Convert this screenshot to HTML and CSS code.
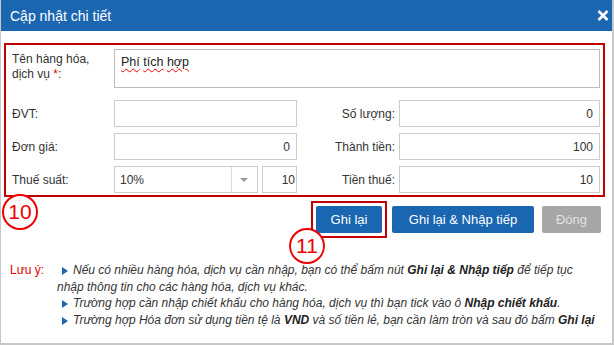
FILE: index.html
```html
<!DOCTYPE html>
<html lang="vi">
<head>
    <meta charset="UTF-8">
    <title>Cập nhật chi tiết</title>
    <link rel="stylesheet" href="styles.css">
</head>
<body>

    <div class="dialog">
        <div class="dialog-title">
            <span>Cập nhật chi tiết</span>
            <svg class="close" width="12" height="11" viewBox="0 0 12 11">
                <path d="M1.5 1 L10.5 10 M10.5 1 L1.5 10" stroke="#fff" stroke-width="2.6"/>
            </svg>
        </div>

        <div class="dialog-body">
            <div class="form-box">
                <div class="lbl lbl-top">Tên hàng hóa,<br>dịch vụ <span class="req">*</span>:</div>
                <div class="field textarea"><span class="spell">Phí</span> <span class="spell">tích</span> <span class="spell">hợp</span></div>

                <div class="lbl">ĐVT:</div>
                <div class="field"></div>
                <div class="lbl lbl-right">Số lượng:</div>
                <div class="field num">0</div>

                <div class="lbl">Đơn giá:</div>
                <div class="field num">0</div>
                <div class="lbl lbl-right">Thành tiền:</div>
                <div class="field num">100</div>

                <div class="lbl">Thuế suất:</div>
                <div class="tax">
                    <div class="select">
                        <span class="select-value">10%</span>
                        <span class="select-arrow"></span>
                    </div>
                    <div class="field num small">10</div>
                </div>
                <div class="lbl lbl-right">Tiền thuế:</div>
                <div class="field num">10</div>
            </div>

            <div class="actions">
                <div class="highlight">
                    <button class="btn">Ghi lại</button>
                </div>
                <button class="btn btn-next">Ghi lại &amp; Nhập tiếp</button>
                <button class="btn btn-off">Đóng</button>
            </div>

            <div class="note">
                <div class="note-title">Lưu ý:</div>
                <div class="note-list">
                    <p><i class="tri"></i>Nếu có nhiều hàng hóa, dịch vụ cần nhập, bạn có thể bấm nút <b>Ghi lại &amp; Nhập tiếp</b> để tiếp tục<br>nhập thông tin cho các hàng hóa, dịch vụ khác.</p>
                    <p><i class="tri"></i>Trường hợp cần nhập chiết khấu cho hàng hóa, dịch vụ thì bạn tick vào ô <b>Nhập chiết khấu</b>.</p>
                    <p><i class="tri"></i>Trường hợp Hóa đơn sử dụng tiền tệ là <b>VND</b> và số tiền lẻ, bạn cần làm tròn và sau đó bấm <b>Ghi lại</b></p>
                </div>
            </div>
        </div>

        <span class="mark mark-10">10</span>
        <span class="mark mark-11">11</span>
    </div>

</body>
</html>
```

FILE: styles.css
```css
body {
    margin: 0;
    font-family: "Liberation Sans", Arial, sans-serif;
    background: #fff;
}

.dialog {
    position: relative;
    box-sizing: border-box;
    width: 614px;
    height: 345px;
    border: solid #c8c8c8;
    border-width: 0 2px 2px 1px;
    background: #fff;
}

.dialog-title {
    height: 31px;
    background: #1b66b1;
    color: #fff;
    font-size: 14px;
    display: flex;
    align-items: center;
    justify-content: space-between;
    padding: 0 3px 0 9px;
}

.close {
    margin-top: -1px;
}

.dialog-body {
    padding: 12px 0 0 3px;
}

.form-box {
    width: 601px;
    box-sizing: border-box;
    border: 2px solid #c00000;
    padding: 4px 3px 2px 6px;
    display: grid;
    grid-template-columns: 102px 183px 102px 201px;
    grid-template-rows: 45px 27px 27px 27px;
    row-gap: 6px;
    font-size: 12px;
    color: #333;
}

.lbl {
    display: flex;
    align-items: center;
}

.lbl-top {
    display: block;
    padding-top: 3px;
    line-height: 15px;
}

.lbl-right {
    justify-content: flex-end;
    padding-right: 4px;
}

.req {
    color: #e00;
}

.field {
    box-sizing: border-box;
    height: 27px;
    border: 1px solid #ccc;
    background: #fff;
    display: flex;
    align-items: center;
    padding: 0 6px;
}

.num {
    justify-content: flex-end;
}

.textarea {
    display: block;
    grid-column: 2 / 5;
    height: 39px;
    padding-top: 5px;
    font-size: 12.5px;
    border-color: #bbb;
    color: #222;
}

.spell {
    text-decoration: underline wavy #e00;
    text-decoration-thickness: 1px;
    text-underline-offset: 2px;
}

.tax {
    display: flex;
    gap: 4px;
}

.select {
    box-sizing: border-box;
    width: 144px;
    height: 27px;
    border: 1px solid #ccc;
    display: flex;
    align-items: center;
}

.select-value {
    flex: 1;
    padding-left: 5px;
}

.select-arrow {
    width: 25px;
    height: 100%;
    border-left: 1px solid #ddd;
    position: relative;
}

.select-arrow::after {
    content: "";
    position: absolute;
    left: 8px;
    top: 11px;
    border-left: 4px solid transparent;
    border-right: 4px solid transparent;
    border-top: 4px solid #999;
}

.small {
    width: 35px;
    padding: 0 1px;
}

.actions {
    display: flex;
    justify-content: flex-end;
    align-items: center;
    padding-right: 11px;
    margin-top: 4px;
}

.highlight {
    border: 2px solid #c00000;
    padding: 3px;
    display: flex;
}

.btn {
    height: 27px;
    padding: 0 10px;
    border: none;
    border-radius: 2px;
    background: #1b66b1;
    color: #fff;
    font-family: "Liberation Sans", Arial, sans-serif;
    font-size: 13px;
    cursor: pointer;
}

.highlight .btn {
    width: 66px;
}

.btn-next {
    width: 142px;
    margin-left: 5px;
}

.btn-off {
    width: 59px;
    margin-left: 8px;
    background: #a6a6a6;
    color: #e2e2e2;
}

.note {
    display: flex;
    margin-top: 24px;
    padding-left: 6px;
    font-size: 12px;
    line-height: 16.7px;
    color: #333;
}

.note-title {
    color: #e00000;
    width: 47px;
}

.note-list p {
    margin: 0;
    font-style: italic;
    text-indent: 5px;
}

.note-list b {
    color: #222;
}

.tri {
    display: inline-block;
    width: 0;
    height: 0;
    border-top: 4px solid transparent;
    border-bottom: 4px solid transparent;
    border-left: 6px solid #1b66b1;
    margin-right: 5px;
    vertical-align: -1px;
}

.mark {
    position: absolute;
    width: 36px;
    height: 36px;
    box-sizing: border-box;
    border: 2px solid #e00;
    border-radius: 50%;
    background: #fff;
    color: #e00;
    font-size: 21px;
    display: flex;
    align-items: center;
    justify-content: center;
}

.mark-10 {
    left: 1px;
    top: 194px;
}

.mark-11 {
    left: 288px;
    top: 228px;
}
```
